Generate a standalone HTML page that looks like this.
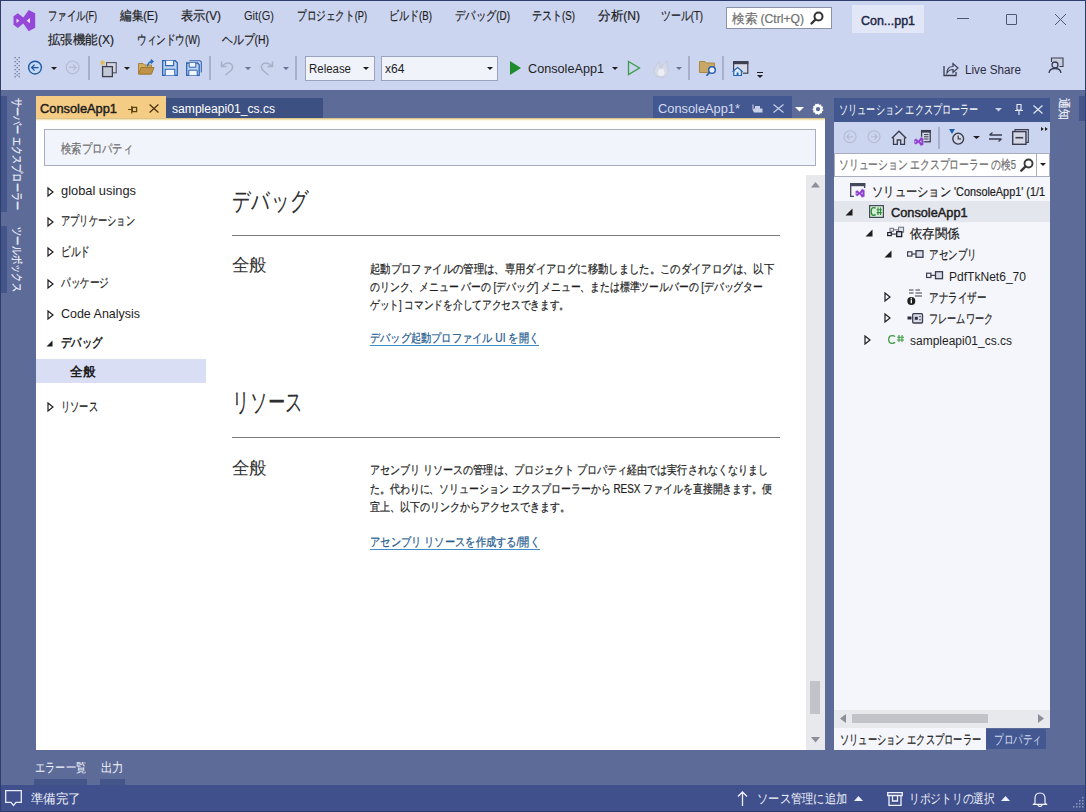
<!DOCTYPE html><html><head><meta charset="utf-8">
<style>
*{box-sizing:border-box}
html,body{margin:0;padding:0;width:1086px;height:812px;overflow:hidden;background:#5D6B99;font-family:"Liberation Sans",sans-serif;}
.a{position:absolute}
.t{position:absolute;white-space:nowrap;transform-origin:0 50%;line-height:20px;height:20px;display:block}
.rv{transform-origin:0 0}
.j{-webkit-text-stroke:0.22px currentColor}
svg{position:absolute;overflow:visible}
</style></head><body>
<div class="a" style="left:0px;top:0px;width:1086px;height:90px;background:#CCD5F0;"></div>
<div class="a" style="left:36px;top:121px;width:789px;height:629px;background:#FFFFFF;"></div>
<div class="a" style="left:36px;top:118px;width:789px;height:1px;background:#D9C58F;"></div>
<div class="a" style="left:36px;top:119px;width:789px;height:1px;background:#F3E3B3;"></div>
<div class="a" style="left:36px;top:120px;width:789px;height:1px;background:#FFF9E8;"></div>
<div class="a" style="left:0px;top:785px;width:1086px;height:27px;background:#40508D;"></div>
<div class="a" style="left:0px;top:0px;width:1086px;height:1px;background:#2E3D6B;"></div>
<div class="a" style="left:0px;top:0px;width:1px;height:812px;background:#2E3D6B;"></div>
<div class="a" style="left:1085px;top:0px;width:1px;height:812px;background:#2E3D6B;"></div>
<div class="a" style="left:0px;top:811px;width:1086px;height:1px;background:#2E3D6B;"></div>
<span class="t j" style="left: 48px; top: 6px; width: 49px; font-size: 12.5px; color: rgb(30, 30, 30); font-weight: normal; transform: scaleX(0.7209);">ファイル(F)</span>
<span class="t j" style="left: 120px; top: 6px; width: 38px; font-size: 12.5px; color: rgb(30, 30, 30); font-weight: normal; transform: scaleX(0.8905);">編集(E)</span>
<span class="t j" style="left: 181px; top: 6px; width: 40px; font-size: 12.5px; color: rgb(30, 30, 30); font-weight: normal; transform: scaleX(0.9374);">表示(V)</span>
<span class="t" style="left: 244px; top: 6px; width: 30px; font-size: 12.5px; color: rgb(30, 30, 30); font-weight: normal; transform: scaleX(0.8815);">Git(G)</span>
<span class="t j" style="left: 297px; top: 6px; width: 70px; font-size: 12.5px; color: rgb(30, 30, 30); font-weight: normal; transform: scaleX(0.7394);">プロジェクト(P)</span>
<span class="t j" style="left: 389px; top: 6px; width: 43px; font-size: 12.5px; color: rgb(30, 30, 30); font-weight: normal; transform: scaleX(0.7724);">ビルド(B)</span>
<span class="t j" style="left: 455px; top: 6px; width: 55px; font-size: 12.5px; color: rgb(30, 30, 30); font-weight: normal; transform: scaleX(0.793);">デバッグ(D)</span>
<span class="t j" style="left: 532px; top: 6px; width: 43px; font-size: 12.5px; color: rgb(30, 30, 30); font-weight: normal; transform: scaleX(0.7724);">テスト(S)</span>
<span class="t j" style="left: 598px; top: 6px; width: 42px; font-size: 12.5px; color: rgb(30, 30, 30); font-weight: normal; transform: scaleX(0.9686);">分析(N)</span>
<span class="t j" style="left: 661px; top: 6px; width: 42px; font-size: 12.5px; color: rgb(30, 30, 30); font-weight: normal; transform: scaleX(0.7641);">ツール(T)</span>
<span class="t j" style="left: 48px; top: 29.5px; width: 66px; font-size: 12.5px; color: rgb(30, 30, 30); font-weight: normal; transform: scaleX(0.9611);">拡張機能(X)</span>
<span class="t j" style="left: 137px; top: 29.5px; width: 63px; font-size: 12.5px; color: rgb(30, 30, 30); font-weight: normal; transform: scaleX(0.7401);">ウィンドウ(W)</span>
<span class="t j" style="left: 222px; top: 29.5px; width: 47px; font-size: 12.5px; color: rgb(30, 30, 30); font-weight: normal; transform: scaleX(0.8339);">ヘルプ(H)</span>
<svg style="left:0;top:0" width="40" height="34"><path d="M13.5 16.3L17.8 13.2L23.3 17.6L28.7 10L35.2 13.3V27.7L28.7 31.2L23.3 23.5L17.8 27.9L13.5 24.8Z" fill="#9548D8"></path><path d="M16.5 18.6L19.4 20.8L16.5 23.1Z M30 18.1L26.6 20.7L30 23.3Z" fill="#EADCFB"></path></svg>
<div class="a" style="left:726px;top:7px;width:106px;height:22px;background:#FFFFFF;border:1px solid #8C93A8"></div>
<span class="t j" style="left: 732px; top: 9px; width: 72px; font-size: 12.5px; color: rgb(112, 112, 112); font-weight: normal; transform: scaleX(0.9695);">検索 (Ctrl+Q)</span>
<svg style="left:810px;top:11px" width="14" height="14" viewBox="0 0 14 14"><circle cx="8.5" cy="5.5" r="4" fill="none" stroke="#333" stroke-width="2"></circle><path d="M5.5 8.5 L1.5 12.5" stroke="#333" stroke-width="2.4" stroke-linecap="round"></path></svg>
<div class="a" style="left:852px;top:5px;width:72px;height:28px;background:#E2E7F7;"></div>
<span class="t" style="left: 861px; top: 10.5px; width: 54px; font-size: 12.5px; color: rgb(30, 42, 72); font-weight: normal; -webkit-text-stroke: 0.45px rgb(30, 42, 72); transform: scaleX(0.996);">Con...pp1</span>
<div class="a" style="left:957px;top:18px;width:12px;height:1px;background:#50566E;"></div>
<div class="a" style="left:1006px;top:14px;width:11px;height:11px;background:transparent;border:1.2px solid #50566E;border-radius:1px"></div>
<svg style="left:1055px;top:14px" width="11" height="11" viewBox="0 0 11 11"><path d="M0 0L11 11M11 0L0 11" stroke="#50566E" stroke-width="1"></path></svg>
<svg style="left:14px;top:57px" width="7" height="21" fill="#4E5470" opacity="0.7"><rect x="0.5" y="0" width="1.3" height="1.3"></rect><rect x="0.5" y="4" width="1.3" height="1.3"></rect><rect x="0.5" y="8" width="1.3" height="1.3"></rect><rect x="0.5" y="12" width="1.3" height="1.3"></rect><rect x="0.5" y="16" width="1.3" height="1.3"></rect><rect x="0.5" y="19" width="1.3" height="1.3"></rect><rect x="4.5" y="0" width="1.3" height="1.3"></rect><rect x="4.5" y="4" width="1.3" height="1.3"></rect><rect x="4.5" y="8" width="1.3" height="1.3"></rect><rect x="4.5" y="12" width="1.3" height="1.3"></rect><rect x="4.5" y="16" width="1.3" height="1.3"></rect><rect x="4.5" y="19" width="1.3" height="1.3"></rect><rect x="2.5" y="2" width="1.3" height="1.3"></rect><rect x="2.5" y="6" width="1.3" height="1.3"></rect><rect x="2.5" y="10" width="1.3" height="1.3"></rect><rect x="2.5" y="14" width="1.3" height="1.3"></rect><rect x="2.5" y="17.5" width="1.3" height="1.3"></rect></svg>
<svg style="left:27px;top:60px" width="16" height="16" viewBox="0 0 16 16"><circle cx="8" cy="7.6" r="6.4" fill="#C4DAF7" stroke="#1F56A0" stroke-width="1.4"></circle><path d="M4.5 7.6H11.5M7.6 4.6L4.6 7.6L7.6 10.6" fill="none" stroke="#1F56A0" stroke-width="1.3"></path></svg>
<svg style="left:51px;top:67px" width="6" height="3"><path d="M0 0H6L3.0 3Z" fill="#1E1E1E"></path></svg>
<svg style="left:65px;top:60px" width="16" height="16" viewBox="0 0 16 16"><circle cx="7.6" cy="7.4" r="6.4" fill="none" stroke="#B4BBD0" stroke-width="1.2"></circle><path d="M4 7.4H11M8 4.4L11 7.4L8 10.4" fill="none" stroke="#B4BBD0" stroke-width="1.2"></path></svg>
<div class="a" style="left:88px;top:56px;width:2px;height:24px;background:#A7AFCB;"></div>
<svg style="left:99px;top:59px" width="20" height="19" viewBox="0 0 20 19"><path d="M3.5 1V6.5M0.8 3.8H6.2M1.6 1.9L5.4 5.7M5.4 1.9L1.6 5.7" stroke="#E6B43A" stroke-width="0.9"></path><rect x="7.6" y="3.6" width="9.6" height="10.2" fill="#D3D7E3" stroke="#50525E" stroke-width="1.1"></rect><rect x="3.6" y="7.6" width="9.8" height="10" fill="#C3C8D6" stroke="#3C3E4A" stroke-width="1.3"></rect></svg>
<svg style="left:124px;top:67px" width="6" height="3"><path d="M0 0H6L3.0 3Z" fill="#1E1E1E"></path></svg>
<svg style="left:138px;top:59px" width="17" height="16" viewBox="0 0 17 16"><path d="M0.5 4.5H5L6.5 6H13.5V15H0.5Z" fill="#D2AE60" stroke="#A8823A" stroke-width="1"></path><path d="M0.5 15L3 8.5H16L13.5 15Z" fill="#C09448" stroke="#A07A35" stroke-width="1"></path><path d="M9.5 7.5Q10 2.5 14.5 2.5M12.8 0.6L15 2.5L12.8 4.6" fill="none" stroke="#2A6BC0" stroke-width="1.4"></path></svg>
<svg style="left:162px;top:60px" width="16" height="16" viewBox="0 0 16 16"><path d="M0.7 0.7H13.2L15.3 2.8V15.3H0.7Z" fill="#BCD4F2" stroke="#2E63B2" stroke-width="1.3"></path><path d="M3.6 0.7V5.6H11.6V0.7" fill="#F2F6FC" stroke="#2E63B2" stroke-width="1.1"></path><path d="M3.2 15.3V9.3H12.8V15.3" fill="#F2F6FC" stroke="#2E63B2" stroke-width="1.1"></path></svg>
<svg style="left:186px;top:60px" width="16" height="16" viewBox="0 0 16 16"><path d="M3.4 0.7H14L15.3 2V12.6" fill="none" stroke="#2E63B2" stroke-width="1.1"></path><path d="M0.7 3H11.5L13.2 4.7V15.3H0.7Z" fill="#BCD4F2" stroke="#2E63B2" stroke-width="1.3"></path><path d="M3.2 3V7.2H9.8V3" fill="#F2F6FC" stroke="#2E63B2" stroke-width="1"></path><path d="M2.8 15.3V10.2H11.2V15.3" fill="#F2F6FC" stroke="#2E63B2" stroke-width="1"></path></svg>
<div class="a" style="left:209px;top:56px;width:2px;height:24px;background:#A7AFCB;"></div>
<svg style="left:220px;top:60px" width="15" height="16" viewBox="0 0 15 16"><path d="M1.5 1.5V6.5H6.5M1.8 6.2Q6 1.5 10.5 3.5Q14.5 6.5 11 10.5L5.5 15" fill="none" stroke="#A9B0C6" stroke-width="1.5"></path></svg>
<svg style="left:245px;top:67px" width="6" height="3"><path d="M0 0H6L3.0 3Z" fill="#6A7192"></path></svg>
<svg style="left:259px;top:60px" width="15" height="16" viewBox="0 0 15 16"><path d="M13.5 1.5V6.5H8.5M13.2 6.2Q9 1.5 4.5 3.5Q0.5 6.5 4 10.5L9.5 15" fill="none" stroke="#A9B0C6" stroke-width="1.5"></path></svg>
<svg style="left:283px;top:67px" width="6" height="3"><path d="M0 0H6L3.0 3Z" fill="#6A7192"></path></svg>
<div class="a" style="left:295px;top:56px;width:2px;height:24px;background:#A7AFCB;"></div>
<div class="a" style="left:305px;top:56px;width:70px;height:25px;background:#F1F3FB;border:1px solid #9AA2BE"></div>
<span class="t" style="left: 309px; top: 58.5px; width: 42px; font-size: 12.5px; color: rgb(30, 30, 30); font-weight: normal; transform: scaleX(0.9155);">Release</span>
<svg style="left:363px;top:67px" width="6" height="3"><path d="M0 0H6L3.0 3Z" fill="#1E1E1E"></path></svg>
<div class="a" style="left:381px;top:56px;width:117px;height:25px;background:#F1F3FB;border:1px solid #9AA2BE"></div>
<span class="t" style="left: 385px; top: 58.5px; width: 19.5px; font-size: 12.5px; color: rgb(30, 30, 30); font-weight: normal; transform: scaleX(0.9674);">x64</span>
<svg style="left:487px;top:67px" width="6" height="3"><path d="M0 0H6L3.0 3Z" fill="#1E1E1E"></path></svg>
<svg style="left:509px;top:60px" width="13" height="16"><path d="M1 1L12 8L1 15Z" fill="#1C8C2C"></path></svg>
<span class="t" style="left: 528px; top: 58.5px; width: 76px; font-size: 12.5px; color: rgb(30, 30, 30); font-weight: normal; transform: scaleX(1.0125);">ConsoleApp1</span>
<svg style="left:612px;top:67px" width="6" height="3"><path d="M0 0H6L3.0 3Z" fill="#1E1E1E"></path></svg>
<svg style="left:627px;top:60px" width="14" height="16"><path d="M1.5 1.5L12.5 8L1.5 14.5Z" fill="none" stroke="#3A9A48" stroke-width="1.3"></path></svg>
<svg style="left:653px;top:60px" width="16" height="18" viewBox="0 0 16 18"><path d="M8 17.3C3.6 17.3 1 14.5 1 11C1 7.6 4.2 5.8 5.6 1.5C7 4.5 6.8 6.5 8 8C9.2 5.2 11.4 2.8 14.6 0.8C12.8 4.6 15.2 7.4 15.2 11.2C15.2 14.8 12.4 17.3 8 17.3Z" fill="#D6DAE6" stroke="#C2C7D6" stroke-width="0.8"></path><path d="M8 16C5.8 16 4.6 14.4 4.6 12.6C4.6 10.8 6 10 6.6 8.4C7.6 10 9 9.6 10.2 8.2C10.6 10.4 11.6 11.2 11.6 12.8C11.6 14.6 10.2 16 8 16Z" fill="#ECEFF6"></path></svg>
<svg style="left:676px;top:67px" width="6" height="3"><path d="M0 0H6L3.0 3Z" fill="#6E7590"></path></svg>
<div class="a" style="left:688px;top:56px;width:2px;height:24px;background:#A7AFCB;"></div>
<svg style="left:699px;top:60px" width="18" height="17" viewBox="0 0 18 17"><path d="M0.5 1.5H6L7.5 3H15.5V12.5H0.5Z" fill="#C9A867" stroke="#A8893F" stroke-width="1"></path><circle cx="13" cy="10" r="3.3" fill="#E8F0FB" stroke="#2A5FB0" stroke-width="1.5"></circle><path d="M10.6 12.4L7.5 15.8" stroke="#2A5FB0" stroke-width="1.7"></path></svg>
<div class="a" style="left:722px;top:56px;width:2px;height:24px;background:#A7AFCB;"></div>
<svg style="left:0;top:0" width="1" height="1"><rect x="733.6" y="61.8" width="14.2" height="11.4" fill="#D5DAE8" stroke="#3C3F50" stroke-width="1.2"></rect><rect x="733" y="61.2" width="15.4" height="3" fill="#3C3F50"></rect><path d="M732.4 71.8L737.6 67.2L742.8 71.8V76.2H732.4Z" fill="#CCD5F0"></path><path d="M733.8 71V75.5H741.4V71M732.6 71.8L737.6 67.6L742.6 71.8" fill="#E8F2FC" stroke="#1F62B8" stroke-width="1.2"></path><rect x="736.6" y="72.5" width="2" height="3" fill="#1F62B8"></rect></svg>
<div class="a" style="left:757px;top:72px;width:6px;height:1px;background:#1E1E1E;"></div>
<svg style="left:757px;top:75px" width="6" height="3"><path d="M0 0H6L3.0 3Z" fill="#1E1E1E"></path></svg>
<svg style="left:943px;top:61px" width="16" height="16" viewBox="0 0 16 16"><path d="M1 5V14.5H13V11" fill="none" stroke="#3A3D50" stroke-width="1.3"></path><path d="M4 12Q4 5.5 10 5.5V2.5L15 7L10 11.5V8.5Q6 8.5 4 12Z" fill="none" stroke="#3A3D50" stroke-width="1.2"></path></svg>
<span class="t" style="left: 965px; top: 59.5px; width: 56px; font-size: 12.5px; color: rgb(42, 45, 62); font-weight: normal; transform: scaleX(0.937);">Live Share</span>
<svg style="left:1048px;top:57px" width="16" height="17" viewBox="0 0 16 17"><path d="M3.5 5V1H15V9.5H11.5" fill="#C9CFE0" stroke="#3A3D50" stroke-width="1.1"></path><circle cx="7" cy="8" r="3" fill="#CCD5F0" stroke="#3A3D50" stroke-width="1.3"></circle><path d="M1 16Q1.5 11.5 7 11.5Q12.5 11.5 13 16" fill="none" stroke="#3A3D50" stroke-width="1.3"></path></svg>
<div class="a" style="left:36px;top:96px;width:130px;height:22px;background:#F5CC84;"></div>
<span class="t" style="left: 40px; top: 98.5px; width: 77px; font-size: 12.5px; color: rgb(30, 30, 30); font-weight: normal; -webkit-text-stroke: 0.45px rgb(30, 30, 30); transform: scaleX(1.0258);">ConsoleApp1</span>
<svg style="left:128px;top:105px" width="10" height="9" viewBox="0 0 10 9"><path d="M0 4.5H3.5M3.8 1V8.5" stroke="#5E4414" stroke-width="1.2"></path><rect x="4.3" y="2.4" width="4.3" height="4.2" fill="none" stroke="#5E4414" stroke-width="1.3"></rect></svg>
<svg style="left:149px;top:104px" width="10" height="9" viewBox="0 0 10 9"><path d="M0.6 0.6L9.4 8.4M9.4 0.6L0.6 8.4" stroke="#4A3510" stroke-width="1.3"></path></svg>
<div class="a" style="left:166px;top:98px;width:157px;height:20px;background:#3D5082;"></div>
<span class="t" style="left: 172px; top: 99px; width: 103px; font-size: 12.5px; color: rgb(255, 255, 255); font-weight: normal; transform: scaleX(0.9688);">sampleapi01_cs.cs</span>
<div class="a" style="left:653px;top:96px;width:139px;height:22px;background:#435890;"></div>
<span class="t" style="left: 658px; top: 98.5px; width: 82px; font-size: 12.5px; color: rgb(213, 220, 240); font-weight: normal; transform: scaleX(1.026);">ConsoleApp1*</span>
<svg style="left:752px;top:104px" width="11" height="9" viewBox="0 0 11 9"><path d="M1 0.5V4" stroke="#C8D0E8" stroke-width="1.1"></path><path d="M0 4.5H10.5V8.5H2Z" fill="#C8D0E8"></path><rect x="3" y="2" width="5" height="3" fill="#C8D0E8"></rect></svg>
<svg style="left:773px;top:104px" width="11" height="9" viewBox="0 0 11 9"><path d="M0.5 0.5L10.5 8.5M10.5 0.5L0.5 8.5" stroke="#C8D0E8" stroke-width="1.2"></path></svg>
<svg style="left:795px;top:107px" width="9" height="4.5"><path d="M0 0H9L4.5 4.5Z" fill="#FFFFFF"></path></svg>
<svg style="left:812px;top:103px" width="12" height="12" viewBox="0 0 12 12"><path d="M6 0.3L7.2 1.8L9.1 1.4L9.4 3.3L11.2 4.1L10.4 5.9L11.6 7.4L9.9 8.4L9.9 10.3L8 10.4L6.9 12L5.4 10.9L3.6 11.6L3 9.8L1.1 9.3L1.6 7.5L0.2 6.2L1.6 5L1.1 3.2L2.9 2.6L3.4 0.8L5.2 1.3Z" fill="#FFFFFF"></path><circle cx="6" cy="6.1" r="2.2" fill="#5D6B99"></circle></svg>
<div class="a" style="left:44px;top:129px;width:772px;height:37px;background:#F2F4FB;border:1px solid #A9AEBE"></div>
<span class="t j" style="left: 61px; top: 139px; width: 72px; font-size: 13px; color: rgb(112, 112, 112); font-weight: normal; transform: scaleX(0.7912);">検索プロパティ</span>
<svg style="left:47px;top:186.5px" width="7" height="10"><path d="M1 1L6 5L1 9Z" fill="none" stroke="#1E1E1E" stroke-width="1.2"></path></svg>
<span class="t" style="left: 61px; top: 181px; width: 75px; font-size: 13px; color: rgb(30, 30, 30); font-weight: normal; transform: scaleX(0.9883);">global usings</span>
<svg style="left:47px;top:216.8px" width="7" height="10"><path d="M1 1L6 5L1 9Z" fill="none" stroke="#1E1E1E" stroke-width="1.2"></path></svg>
<span class="t j" style="left: 61px; top: 211.3px; width: 74px; font-size: 13px; color: rgb(30, 30, 30); font-weight: normal; transform: scaleX(0.7115);">アプリケーション</span>
<svg style="left:47px;top:247.3px" width="7" height="10"><path d="M1 1L6 5L1 9Z" fill="none" stroke="#1E1E1E" stroke-width="1.2"></path></svg>
<span class="t j" style="left: 61px; top: 241.8px; width: 29px; font-size: 13px; color: rgb(30, 30, 30); font-weight: normal; transform: scaleX(0.7436);">ビルド</span>
<svg style="left:47px;top:278.5px" width="7" height="10"><path d="M1 1L6 5L1 9Z" fill="none" stroke="#1E1E1E" stroke-width="1.2"></path></svg>
<span class="t j" style="left: 61px; top: 273px; width: 48px; font-size: 13px; color: rgb(30, 30, 30); font-weight: normal; transform: scaleX(0.7385);">パッケージ</span>
<svg style="left:47px;top:309.5px" width="7" height="10"><path d="M1 1L6 5L1 9Z" fill="none" stroke="#1E1E1E" stroke-width="1.2"></path></svg>
<span class="t" style="left: 61px; top: 304px; width: 79px; font-size: 13px; color: rgb(30, 30, 30); font-weight: normal; transform: scaleX(0.9588);">Code Analysis</span>
<svg style="left:46px;top:340px" width="7" height="7"><path d="M6.5 0.5V6.5H0.5Z" fill="#1E1E1E"></path></svg>
<span class="t" style="left: 61px; top: 332.5px; width: 41.5px; font-size: 13px; color: rgb(30, 30, 30); font-weight: bold; transform: scaleX(0.7981);">デバッグ</span>
<div class="a" style="left:36px;top:359px;width:170px;height:24px;background:#D9DEF5;"></div>
<span class="t" style="left: 69.5px; top: 361.5px; width: 25.5px; font-size: 13px; color: rgb(30, 30, 30); font-weight: bold; transform: scaleX(0.9808);">全般</span>
<svg style="left:47px;top:402.0px" width="7" height="10"><path d="M1 1L6 5L1 9Z" fill="none" stroke="#1E1E1E" stroke-width="1.2"></path></svg>
<span class="t j" style="left: 61px; top: 396.5px; width: 37px; font-size: 13px; color: rgb(30, 30, 30); font-weight: normal; transform: scaleX(0.7115);">リソース</span>
<span class="t" style="left: 232px; top: 190.5px; width: 77px; font-size: 26px; color: rgb(46, 46, 46); font-weight: normal; transform: scaleX(0.713);">デバッグ</span>
<div class="a" style="left:232px;top:235px;width:548px;height:1px;background:#7A7A7A;"></div>
<span class="t" style="left: 232px; top: 255px; width: 35px; font-size: 18px; color: rgb(51, 51, 51); font-weight: normal; transform: scaleX(0.9722);">全般</span>
<span class="t j" style="left: 370px; top: 258.6px; width: 404px; font-size: 12px; color: rgb(30, 30, 30); font-weight: normal; transform: scaleX(0.8632);">起動プロファイルの管理は、専用ダイアログに移動しました。このダイアログは、以下</span>
<span class="t j" style="left: 370px; top: 276.6px; width: 393px; font-size: 12px; color: rgb(30, 30, 30); font-weight: normal; transform: scaleX(0.8199);">のリンク、メニュー バーの [デバッグ] メニュー、または標準ツールバーの [デバッグター</span>
<span class="t j" style="left: 370px; top: 295px; width: 199px; font-size: 12px; color: rgb(30, 30, 30); font-weight: normal; transform: scaleX(0.8067);">ゲット] コマンドを介してアクセスできます。</span>
<span class="t j" style="left: 370px; top: 328.4px; width: 169px; font-size: 12px; color: rgb(35, 90, 142); font-weight: normal; text-decoration: underline rgb(63, 140, 198); text-underline-offset: 2.5px; transform: scaleX(0.8506);">デバッグ起動プロファイル UI を開く</span>
<span class="t" style="left: 232px; top: 391.8px; width: 71.5px; font-size: 26px; color: rgb(46, 46, 46); font-weight: normal; transform: scaleX(0.6682);">リソース</span>
<div class="a" style="left:232px;top:437px;width:548px;height:1px;background:#7A7A7A;"></div>
<span class="t" style="left: 232px; top: 457.5px; width: 35px; font-size: 18px; color: rgb(51, 51, 51); font-weight: normal; transform: scaleX(0.9722);">全般</span>
<span class="t j" style="left: 370px; top: 459.9px; width: 398px; font-size: 12px; color: rgb(30, 30, 30); font-weight: normal; transform: scaleX(0.8385);">アセンブリ リソースの管理は、プロジェクト プロパティ経由では実行されなくなりまし</span>
<span class="t j" style="left: 370px; top: 478.9px; width: 402px; font-size: 12px; color: rgb(30, 30, 30); font-weight: normal; transform: scaleX(0.826);">た。代わりに、ソリューション エクスプローラーから RESX ファイルを直接開きます。便</span>
<span class="t j" style="left: 370px; top: 496.6px; width: 200px; font-size: 12px; color: rgb(30, 30, 30); font-weight: normal; transform: scaleX(0.8333);">宜上、以下のリンクからアクセスできます。</span>
<span class="t j" style="left: 370px; top: 531.9px; width: 170px; font-size: 12px; color: rgb(35, 90, 142); font-weight: normal; text-decoration: underline rgb(63, 140, 198); text-underline-offset: 2.5px; transform: scaleX(0.8557);">アセンブリ リソースを作成する/開く</span>
<div class="a" style="left:806px;top:175px;width:19px;height:575px;background:#E8E9ED;"></div>
<svg style="left:811px;top:182px" width="9" height="6"><path d="M0 5.5H9L4.5 0Z" fill="#8C8F9A"></path></svg>
<div class="a" style="left:810px;top:681px;width:10px;height:33px;background:#C2C3C9;"></div>
<svg style="left:811px;top:737px" width="9" height="6"><path d="M0 0H9L4.5 5.5Z" fill="#8C8F9A"></path></svg>
<div class="a" style="left:834px;top:98px;width:216px;height:24px;background:#425790;"></div>
<span class="t" style="left: 839px; top: 100px; width: 139.5px; font-size: 12.5px; color: rgb(255, 255, 255); font-weight: normal; transform: scaleX(0.7028);">ソリューション エクスプローラー</span>
<svg style="left:995px;top:108px" width="7" height="3.5"><path d="M0 0H7L3.5 3.5Z" fill="#C8D0E8"></path></svg>
<svg style="left:1015px;top:104px" width="8" height="11" viewBox="0 0 8 11"><path d="M1.5 0.5H6.5M2 0.5V6H6V0.5M0 6.5H8M4 6.5V11" fill="none" stroke="#E0E6F5" stroke-width="1.2"></path></svg>
<svg style="left:1033px;top:105px" width="10" height="9" viewBox="0 0 10 9"><path d="M0.5 0.5L9.5 8.5M9.5 0.5L0.5 8.5" stroke="#E0E6F5" stroke-width="1.2"></path></svg>
<div class="a" style="left:834px;top:122px;width:216px;height:31px;background:#CCD5F0;"></div>
<svg style="left:843px;top:130px" width="14" height="14" viewBox="0 0 14 14"><circle cx="7" cy="6.7" r="6" fill="none" stroke="#B4BAD0" stroke-width="1.1"></circle><path d="M3.8 6.7H10.2M6.5 4L3.8 6.7L6.5 9.4" fill="none" stroke="#B4BAD0" stroke-width="1.1"></path></svg>
<svg style="left:867px;top:130px" width="14" height="14" viewBox="0 0 14 14"><circle cx="7" cy="6.7" r="6" fill="none" stroke="#B4BAD0" stroke-width="1.1"></circle><path d="M3.8 6.7H10.2M7.5 4L10.2 6.7L7.5 9.4" fill="none" stroke="#B4BAD0" stroke-width="1.1"></path></svg>
<svg style="left:891px;top:130px" width="16" height="15" viewBox="0 0 16 15"><path d="M2.5 7.5V14.3H6.3V10H9.7V14.3H13.5V7.5" fill="#D4D8E4" stroke="#3A3D50" stroke-width="1.3"></path><path d="M0.8 8.2L8 1.2L15.2 8.2" fill="none" stroke="#3A3D50" stroke-width="1.4"></path></svg>
<svg style="left:0;top:0" width="1" height="1"><rect x="921.6" y="130.6" width="8.6" height="11.2" fill="#D6DAE6" stroke="#3A3D50" stroke-width="1.3"></rect><rect x="921" y="130" width="9.8" height="2.6" fill="#3A3D50"></rect><path d="M924 134.6H928.5M924 136.8H928.5M924 139H928.5" stroke="#3A3D50" stroke-width="1"></path><g transform="translate(914,136.8) scale(0.45) translate(-13.5,-10)"><path d="M13.5 16.3L17.8 13.2L23.3 17.6L28.7 10L35.2 13.3V27.7L28.7 31.2L23.3 23.5L17.8 27.9L13.5 24.8Z" fill="#8E40D0" stroke="#CCD5F0" stroke-width="1.5"></path><path d="M16.5 18.6L19.4 20.8L16.5 23.1Z M30 18.1L26.6 20.7L30 23.3Z" fill="#E6D8F8"></path></g></svg>
<div class="a" style="left:938px;top:127px;width:2px;height:22px;background:#A7AFCB;"></div>
<svg style="left:949px;top:129px" width="17" height="16" viewBox="0 0 17 16"><path d="M0 0H6L3 5Z" fill="#1F5FB0"></path><circle cx="9.2" cy="9.7" r="5.4" fill="#D4D8E4" stroke="#3A3D50" stroke-width="1.4"></circle><path d="M9.2 6.5V9.9H12" fill="none" stroke="#3A3D50" stroke-width="1.2"></path></svg>
<svg style="left:973px;top:136px" width="7" height="3"><path d="M0 0H7L3.5 3Z" fill="#1E1E1E"></path></svg>
<svg style="left:988px;top:132px" width="15" height="10" viewBox="0 0 15 10"><path d="M14 3H1.5M4.5 0.5L1.5 3M1 7H13.5M10.5 9.5L13.5 7" fill="none" stroke="#3A3D50" stroke-width="1.3"></path></svg>
<svg style="left:1012px;top:129px" width="17" height="16" viewBox="0 0 17 16"><path d="M3 2.5V0.6H16.3V13.4H14.2" fill="none" stroke="#3A3D50" stroke-width="1.1"></path><rect x="0.7" y="2.6" width="13.3" height="12.7" fill="#D4D8E4" stroke="#3A3D50" stroke-width="1.4"></rect><path d="M3.5 8.7H11.2" stroke="#3A3D50" stroke-width="1.6"></path></svg>
<svg style="left:1041px;top:127px" width="7" height="4"><path d="M0 0L2.8 2L0 4ZM4 0L6.8 2L4 4Z" fill="#1E1E1E"></path></svg>
<div class="a" style="left:834px;top:153px;width:216px;height:24px;background:#FFFFFF;border:1px solid #A9AEBE"></div>
<div class="a" style="left:1036px;top:154px;width:1px;height:22px;background:#A9AEBE;"></div>
<span class="t j" style="left: 839px; top: 155.4px; width: 177px; font-size: 12.5px; color: rgb(112, 112, 112); font-weight: normal; transform: scaleX(0.7535);">ソリューション エクスプローラー の検5</span>
<svg style="left:1020px;top:158px" width="14" height="14" viewBox="0 0 14 14"><circle cx="8.5" cy="5.5" r="4" fill="none" stroke="#3A3A3A" stroke-width="1.9"></circle><path d="M5.6 8.4L1.3 12.7" stroke="#3A3A3A" stroke-width="2.4" stroke-linecap="round"></path></svg>
<svg style="left:1040px;top:163px" width="6" height="3"><path d="M0 0H6L3.0 3Z" fill="#1E1E1E"></path></svg>
<div class="a" style="left:834px;top:177px;width:216px;height:533px;background:#F5F6FB;"></div>
<div class="a" style="left:834px;top:201px;width:216px;height:21px;background:#E4E6EE;"></div>
<svg style="left:0;top:0" width="1" height="1"><path d="M854 196.3H850.7V183.7H864.6V188" fill="none" stroke="#45475A" stroke-width="1.3"></path><rect x="850" y="183" width="15.3" height="3.2" fill="#45475A"></rect><g transform="translate(855.3,188.6) scale(0.44) translate(-13.5,-10)"><path d="M13.5 16.3L17.8 13.2L23.3 17.6L28.7 10L35.2 13.3V27.7L28.7 31.2L23.3 23.5L17.8 27.9L13.5 24.8Z" fill="#8E40D0" stroke="#F5F6FB" stroke-width="1.2"></path><path d="M16.5 18.6L19.4 20.8L16.5 23.1Z M30 18.1L26.6 20.7L30 23.3Z" fill="#F0E6FA"></path></g></svg>
<span class="t j" style="left: 871.5px; top: 181.8px; width: 173px; font-size: 12.5px; color: rgb(30, 30, 30); font-weight: normal; transform: scaleX(0.8679);">ソリューション 'ConsoleApp1' (1/1</span>
<svg style="left:845px;top:208px" width="8" height="8"><path d="M7.5 0.5V7.5H0.5Z" fill="#1E1E1E"></path></svg>
<svg style="left:869px;top:205px" width="15" height="13" viewBox="0 0 15 13"><rect x="0.6" y="0.6" width="13.8" height="11.8" fill="#D6EDD6" stroke="#45475A" stroke-width="1.2"></rect><path d="M6.6 3.3Q5.9 2.6 4.6 2.6Q2.2 2.6 2.2 6.5Q2.2 10.3 4.6 10.3Q5.9 10.3 6.6 9.6" fill="none" stroke="#2E8B3A" stroke-width="1.4"></path><path d="M9 2.5V10M11.5 2.5V10M7.7 4.8H12.8M7.7 7.6H12.8" stroke="#2E8B3A" stroke-width="1.1"></path></svg>
<span class="t" style="left: 891px; top: 202.5px; width: 76.6px; font-size: 12.5px; color: rgb(30, 30, 30); font-weight: normal; -webkit-text-stroke: 0.45px rgb(30, 30, 30); transform: scaleX(1.0205);">ConsoleApp1</span>
<svg style="left:865px;top:229px" width="8" height="8"><path d="M7.5 0.5V7.5H0.5Z" fill="#1E1E1E"></path></svg>
<svg style="left:0;top:0" width="1" height="1"><rect x="890" y="228.3" width="3.4" height="3" fill="none" stroke="#6A6D7A" stroke-width="1"></rect><path d="M893.4 229.8H898.6" stroke="#6A6D7A" stroke-width="1"></path><rect x="898.6" y="227.2" width="5" height="5" fill="#E0E2EA" stroke="#6A6D7A" stroke-width="1"></rect><rect x="887.7" y="232.6" width="3.6" height="3" fill="#F5F6FB" stroke="#1E1E28" stroke-width="1.2"></rect><path d="M891.3 234.1H896.5" stroke="#3A3D50" stroke-width="1.2"></path><rect x="896.7" y="231.7" width="5" height="4.9" fill="#DADDE8" stroke="#1E1E28" stroke-width="1.3"></rect></svg>
<span class="t j" style="left: 910px; top: 223.7px; width: 50px; font-size: 12.5px; color: rgb(30, 30, 30); font-weight: normal; transform: scaleX(0.9615);">依存関係</span>
<svg style="left:884px;top:250px" width="8" height="8"><path d="M7.5 0.5V7.5H0.5Z" fill="#1E1E1E"></path></svg>
<svg style="left:907px;top:250px" width="17" height="8" viewBox="0 0 17 8"><rect x="0.6" y="1.8" width="4.3" height="4.3" fill="none" stroke="#3A3D50" stroke-width="1.2"></rect><path d="M4.9 4H9" stroke="#3A3D50" stroke-width="1.2"></path><rect x="9" y="0.7" width="7" height="6.6" fill="#DADDE8" stroke="#3A3D50" stroke-width="1.3"></rect></svg>
<span class="t j" style="left: 929.2px; top: 245px; width: 47.6px; font-size: 12.5px; color: rgb(30, 30, 30); font-weight: normal; transform: scaleX(0.7323);">アセンブリ</span>
<svg style="left:926px;top:271px" width="17" height="9" viewBox="0 0 17 9"><rect x="0.6" y="2.2" width="4.3" height="4.3" fill="none" stroke="#3A3D50" stroke-width="1.2"></rect><path d="M4.9 4.4H9.5" stroke="#3A3D50" stroke-width="1.2"></path><rect x="9.5" y="0.7" width="7" height="7" fill="#DADDE8" stroke="#3A3D50" stroke-width="1.3"></rect></svg>
<span class="t" style="left: 948.5px; top: 267px; width: 77px; font-size: 12.5px; color: rgb(30, 30, 30); font-weight: normal; transform: scaleX(0.9634);">PdfTkNet6_70</span>
<svg style="left:884px;top:292px" width="7" height="10"><path d="M1 1L6 5L1 9Z" fill="none" stroke="#1E1E1E" stroke-width="1.2"></path></svg>
<svg style="left:907px;top:289px" width="16" height="17" viewBox="0 0 16 17"><path d="M2 1H6.5M8.5 1H13M2 4H6.5M8.5 4H15M8 7H15" stroke="#3A3D50" stroke-width="1.1"></path><circle cx="4.3" cy="12" r="4" fill="#1E1E1E"></circle><path d="M4.3 10.5V14.2" stroke="#FFF" stroke-width="1.3"></path><circle cx="4.3" cy="9.4" r="0.7" fill="#FFF"></circle></svg>
<span class="t j" style="left: 929.2px; top: 287.5px; width: 57px; font-size: 12.5px; color: rgb(30, 30, 30); font-weight: normal; transform: scaleX(0.7308);">アナライザー</span>
<svg style="left:884px;top:313px" width="7" height="10"><path d="M1 1L6 5L1 9Z" fill="none" stroke="#1E1E1E" stroke-width="1.2"></path></svg>
<svg style="left:907px;top:313px" width="17" height="11" viewBox="0 0 17 11"><rect x="0.5" y="3.5" width="4" height="3" fill="#2A2D3E"></rect><rect x="5.7" y="0.7" width="9.8" height="9.3" rx="1" fill="#DADDE8" stroke="#3A3D50" stroke-width="1.3"></rect><rect x="7.8" y="3.8" width="3" height="3" fill="#2A2D3E"></rect><path d="M13 3V4.2M13 6V7.2" stroke="#2A2D3E" stroke-width="1.2"></path></svg>
<span class="t j" style="left: 929.2px; top: 308.7px; width: 64px; font-size: 12.5px; color: rgb(30, 30, 30); font-weight: normal; transform: scaleX(0.7033);">フレームワーク</span>
<svg style="left:864px;top:335px" width="7" height="10"><path d="M1 1L6 5L1 9Z" fill="none" stroke="#1E1E1E" stroke-width="1.2"></path></svg>
<svg style="left:888px;top:335px" width="17" height="9" viewBox="0 0 17 9"><path d="M7 1.6Q6 0.6 4.3 0.6Q0.7 0.6 0.7 4.4Q0.7 8.3 4.3 8.3Q6 8.3 7 7.3" fill="none" stroke="#3E9A42" stroke-width="1.3"></path><path d="M11 0V7M14 0V7M9 2.2H16M9 5H16" stroke="#3E9A42" stroke-width="1.1"></path></svg>
<span class="t" style="left: 910px; top: 331px; width: 102px; font-size: 12.5px; color: rgb(30, 30, 30); font-weight: normal; transform: scaleX(0.9594);">sampleapi01_cs.cs</span>
<div class="a" style="left:834px;top:710px;width:216px;height:18px;background:#E8E9ED;"></div>
<svg style="left:840px;top:714px" width="6" height="9"><path d="M6 0V9L0 4.5Z" fill="#8C8F9A"></path></svg>
<div class="a" style="left:852px;top:714px;width:136px;height:9px;background:#C2C3C9;"></div>
<svg style="left:1038px;top:714px" width="6" height="9"><path d="M0 0V9L6 4.5Z" fill="#8C8F9A"></path></svg>
<div class="a" style="left:834px;top:728px;width:152px;height:22px;background:#F5F6FB;"></div>
<span class="t j" style="left: 839.5px; top: 729.7px; width: 141px; font-size: 12.5px; color: rgb(30, 30, 30); font-weight: normal; transform: scaleX(0.7104);">ソリューション エクスプローラー</span>
<div class="a" style="left:986px;top:729px;width:60px;height:20px;background:#435890;"></div>
<span class="t" style="left: 994px; top: 729.5px; width: 48px; font-size: 12.5px; color: rgb(213, 220, 240); font-weight: normal; transform: scaleX(0.7385);">プロパティ</span>
<div class="a" style="left:1px;top:96px;width:6px;height:116px;background:#44558C;"></div>
<div class="a" style="left:1px;top:226px;width:6px;height:67px;background:#44558C;"></div>
<span class="t rv" style="left: 26.5px; top: 98px; width: 112px; font-size: 11.5px; color: rgb(240, 242, 250); -webkit-text-stroke: 0.2px rgb(240, 242, 250); transform: rotate(90deg) scaleX(0.7609);">サーバー エクスプローラー</span>
<span class="t rv" style="left: 26.5px; top: 227px; width: 65px; font-size: 11.5px; color: rgb(240, 242, 250); -webkit-text-stroke: 0.2px rgb(240, 242, 250); transform: rotate(90deg) scaleX(0.7738);">ツールボックス</span>
<div class="a" style="left:1079px;top:96px;width:6px;height:25px;background:#44558C;"></div>
<span class="t rv" style="left: 1073.5px; top: 98px; width: 22px; font-size: 11.5px; color: rgb(240, 242, 250); -webkit-text-stroke: 0.2px rgb(240, 242, 250); transform: rotate(90deg) scaleX(0.9167);">通知</span>
<span class="t" style="left: 35px; top: 757.7px; width: 51px; font-size: 12.5px; color: rgb(240, 242, 250); font-weight: normal; transform: scaleX(0.7846);">エラー一覧</span>
<span class="t" style="left: 100.5px; top: 757.7px; width: 23px; font-size: 12.5px; color: rgb(240, 242, 250); font-weight: normal; transform: scaleX(0.8846);">出力</span>
<div class="a" style="left:34px;top:779px;width:53px;height:6px;background:#44558A;"></div>
<div class="a" style="left:100px;top:779px;width:25px;height:6px;background:#44558A;"></div>
<svg style="left:5px;top:790px" width="18" height="17" viewBox="0 0 18 17"><path d="M0.7 0.7H16.3V12.3H11L8.5 15.5L6 12.3H0.7Z" fill="none" stroke="#E8ECF8" stroke-width="1.3"></path></svg>
<span class="t" style="left: 31px; top: 788.5px; width: 50px; font-size: 13px; color: rgb(240, 242, 250); font-weight: normal; transform: scaleX(0.9615);">準備完了</span>
<svg style="left:737px;top:791px" width="11" height="15" viewBox="0 0 11 15"><path d="M5.5 1V15M1 5.5L5.5 1L10 5.5" fill="none" stroke="#F0F2FA" stroke-width="1.3"></path></svg>
<span class="t" style="left: 757px; top: 788.5px; width: 90px; font-size: 12.5px; color: rgb(240, 242, 250); font-weight: normal; transform: scaleX(0.8654);">ソース管理に追加</span>
<svg style="left:854px;top:796px" width="9" height="5"><path d="M0 5H9L4.5 0Z" fill="#F0F2FA"></path></svg>
<svg style="left:887px;top:792px" width="16" height="14" viewBox="0 0 16 14"><path d="M0.7 0.7H15.3V3.5H0.7ZM2 3.5V13.3H14V3.5M5.5 3.5V9H10.5V3.5" fill="none" stroke="#F0F2FA" stroke-width="1.3"></path></svg>
<span class="t" style="left: 908.7px; top: 788.5px; width: 86px; font-size: 12.5px; color: rgb(240, 242, 250); font-weight: normal; transform: scaleX(0.8269);">リポジトリの選択</span>
<svg style="left:1001px;top:796px" width="9" height="5"><path d="M0 5H9L4.5 0Z" fill="#F0F2FA"></path></svg>
<svg style="left:1033px;top:792px" width="14" height="15" viewBox="0 0 14 15"><path d="M2 11V6.5Q2 1 7 1Q12 1 12 6.5V11L13.3 12.3H0.7Z M5 12.5Q5 14.3 7 14.3Q9 14.3 9 12.5" fill="none" stroke="#F0F2FA" stroke-width="1.2"></path></svg>
<svg style="left:1071px;top:797px" width="14" height="11" fill="#8C98C0"><rect x="11" y="0" width="1.5" height="1.5"></rect><rect x="11" y="3" width="1.5" height="1.5"></rect><rect x="8" y="3" width="1.5" height="1.5"></rect><rect x="11" y="6" width="1.5" height="1.5"></rect><rect x="8" y="6" width="1.5" height="1.5"></rect><rect x="5" y="6" width="1.5" height="1.5"></rect><rect x="11" y="9" width="1.5" height="1.5"></rect><rect x="8" y="9" width="1.5" height="1.5"></rect><rect x="5" y="9" width="1.5" height="1.5"></rect><rect x="2" y="9" width="1.5" height="1.5"></rect></svg>
<script>
(function(){var els=document.querySelectorAll('.t');for(var i=0;i<els.length;i++){var e=els[i];var w=parseFloat(e.style.width);if(!w)continue;e.style.transform='none';e.style.width='auto';var n=e.getBoundingClientRect().width;var rv=e.className.indexOf('rv')>=0;if(n>0){e.style.transform=(rv?'rotate(90deg) ':'')+'scaleX('+(w/n).toFixed(4)+')';}e.style.width=w+'px';}})();
</script>

</body></html>
